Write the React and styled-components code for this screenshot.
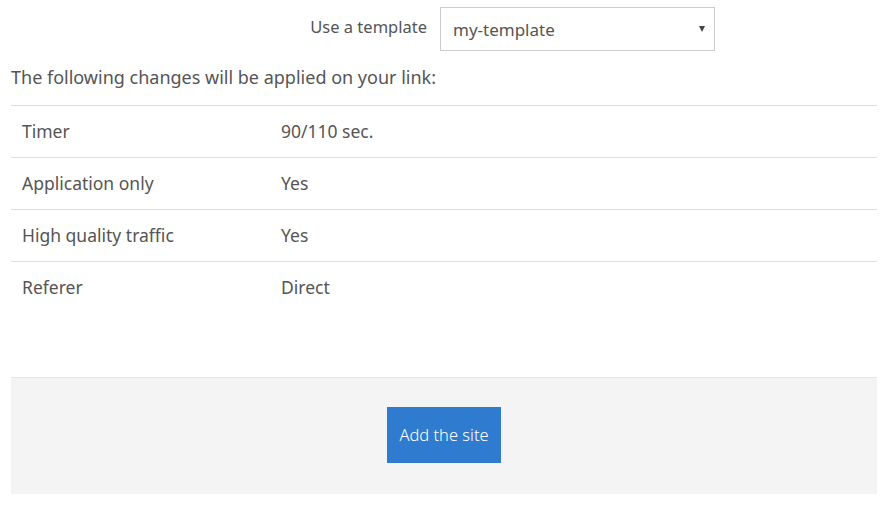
import React from "react";
import styled, { createGlobalStyle } from "styled-components";

const Global = createGlobalStyle`
  html, body { margin: 0; padding: 0; background: #fff; }
  body { font-family: "Noto Sans", "Open Sans", sans-serif; color: #555; }
`;

const Page = styled.div`
  padding: 7px 17px 15px 11px;
  display: flex;
  flex-direction: column;
`;

const FormRow = styled.div`
  display: grid;
  grid-template-columns: 416px 275px;
  column-gap: 13px;
  align-items: center;
`;

const Label = styled.label`
  text-align: right;
  font-size: 16.5px;
  color: #555;
  padding-bottom: 6px;
`;

const SelectWrap = styled.div`
  position: relative;
  height: 44px;
  &::after {
    content: "";
    position: absolute;
    right: 10px;
    top: 19px;
    border-left: 3.5px solid transparent;
    border-right: 3.5px solid transparent;
    border-top: 6px solid #444;
    pointer-events: none;
  }
`;

const Select = styled.select`
  appearance: none;
  -webkit-appearance: none;
  width: 100%;
  height: 44px;
  box-sizing: border-box;
  border: 1px solid #ccc;
  background: #fff;
  font-family: inherit;
  font-size: 17px;
  color: #555;
  padding: 0 12px;
  outline: none;
`;

const Intro = styled.p`
  margin: 14px 0 16px;
  font-size: 18px;
  line-height: 24px;
  color: #555;
`;

const Table = styled.table`
  width: 100%;
  border-collapse: collapse;
`;

const Row = styled.tr`
  border-top: 1px solid #ddd;
`;

const Cell = styled.td`
  height: 49px;
  padding: 0 11px 2px;
  font-size: 17.5px;
  color: #555;
  width: ${(p) => p.$w || "auto"};
  vertical-align: middle;
`;

const Footer = styled.div`
  margin-top: 64px;
  border-top: 1px solid #e5e5e5;
  background: #f4f4f4;
  display: flex;
  justify-content: center;
  padding: 29px 0 31px;
`;

const Button = styled.button`
  background: #2f7bcf;
  border: none;
  color: #fff;
  font-family: inherit;
  font-weight: 300;
  font-size: 16.5px;
  height: 56px;
  padding: 0 12px 2px;
  cursor: pointer;
`;

const rows = [
  ["Timer", "90/110 sec."],
  ["Application only", "Yes"],
  ["High quality traffic", "Yes"],
  ["Referer", "Direct"],
];

export default function App() {
  return (
    <>
      <Global />
      <Page>
        <FormRow>
          <Label>Use a template</Label>
          <SelectWrap>
            <Select defaultValue="my-template">
              <option value="my-template">my-template</option>
            </Select>
          </SelectWrap>
        </FormRow>
        <Intro>The following changes will be applied on your link:</Intro>
        <Table>
          <tbody>
            {rows.map(([k, v]) => (
              <Row key={k}>
                <Cell $w="237px">{k}</Cell>
                <Cell>{v}</Cell>
              </Row>
            ))}
          </tbody>
        </Table>
        <Footer>
          <Button>Add the site</Button>
        </Footer>
      </Page>
    </>
  );
}
